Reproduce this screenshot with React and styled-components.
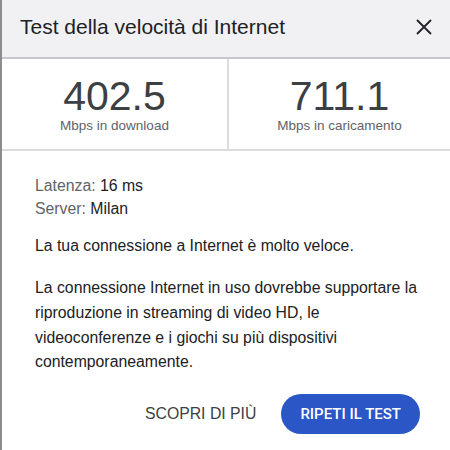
import styled, { createGlobalStyle } from 'styled-components'

const GlobalStyle = createGlobalStyle`
  html, body {
    margin: 0;
    padding: 0;
    background: #ffffff;
  }
  body {
    font-family: "Liberation Sans", Arial, sans-serif;
  }
`

const Dialog = styled.div`
  width: 450px;
  height: 450px;
  box-sizing: border-box;
  border-left: 2px solid #8c8c8c;
  background: #ffffff;
  display: flex;
  flex-direction: column;
`

const Header = styled.div`
  height: 59px;
  box-sizing: border-box;
  background: #f1f1f3;
  border-bottom: 2px solid #c8c8cc;
  display: flex;
  align-items: center;
  justify-content: space-between;
  padding: 0 16px 4px 18px;
`

const Title = styled.h1`
  margin: 0;
  font-size: 21px;
  font-weight: 400;
  color: #202124;
`

const CloseButton = styled.button`
  border: none;
  background: none;
  padding: 0;
  width: 20px;
  height: 20px;
  display: flex;
  align-items: center;
  justify-content: center;
  cursor: pointer;
`

const Stats = styled.div`
  display: grid;
  grid-template-columns: 225px 1fr;
  border-bottom: 2px solid #dcdcdf;
`

const Stat = styled.div`
  display: flex;
  flex-direction: column;
  align-items: center;
  padding: 16px 0 15px;
  ${(props) => props.$divided && 'border-left: 2px solid #dcdcdf;'}
`

const Value = styled.div`
  font-size: 41px;
  line-height: 42px;
  color: #3c4043;
`

const Unit = styled.div`
  margin-top: 1px;
  font-size: 13.5px;
  line-height: 16px;
  color: #5f6368;
`

const Body = styled.div`
  padding: 23px 18px 0 33px;
  font-size: 15.8px;
  color: #202124;
`

const InfoLine = styled.div`
  line-height: 23px;
`

const InfoLabel = styled.span`
  color: #5f6368;
`

const Summary = styled.p`
  margin: 14px 0 0;
  line-height: 23px;
`

const Details = styled.p`
  margin: 19px 0 0;
  line-height: 24.8px;
`

const Actions = styled.div`
  display: flex;
  justify-content: flex-end;
  align-items: center;
  gap: 25px;
  padding: 19px 30px 0 0;
`

const TextButton = styled.button`
  border: none;
  background: none;
  padding: 0;
  font-family: inherit;
  font-size: 15.8px;
  color: #3c4043;
  text-transform: uppercase;
  cursor: pointer;
`

const PrimaryButton = styled.button`
  height: 40px;
  padding: 0 19px;
  border: none;
  border-radius: 20px;
  background: #2a56c6;
  color: #ffffff;
  font-family: Roboto, "Liberation Sans", sans-serif;
  font-weight: 500;
  font-size: 15px;
  text-transform: uppercase;
  cursor: pointer;
`

function CloseIcon() {
  return (
    <svg width="16" height="16" viewBox="0 0 16 16">
      <path d="M1 1 L15 15 M15 1 L1 15" stroke="#202124" strokeWidth="1.8" fill="none" />
    </svg>
  )
}

export default function App() {
  return (
    <>
      <GlobalStyle />
      <Dialog>
        <Header>
          <Title>Test della velocità di Internet</Title>
          <CloseButton aria-label="Chiudi">
            <CloseIcon />
          </CloseButton>
        </Header>
        <Stats>
          <Stat>
            <Value>402.5</Value>
            <Unit>Mbps in download</Unit>
          </Stat>
          <Stat $divided>
            <Value>711.1</Value>
            <Unit>Mbps in caricamento</Unit>
          </Stat>
        </Stats>
        <Body>
          <InfoLine>
            <InfoLabel>Latenza:</InfoLabel> 16 ms
          </InfoLine>
          <InfoLine>
            <InfoLabel>Server:</InfoLabel> Milan
          </InfoLine>
          <Summary>La tua connessione a Internet è molto veloce.</Summary>
          <Details>
            La connessione Internet in uso dovrebbe supportare la riproduzione in streaming di
            video HD, le videoconferenze e i giochi su più dispositivi contemporaneamente.
          </Details>
        </Body>
        <Actions>
          <TextButton>Scopri di più</TextButton>
          <PrimaryButton>Ripeti il test</PrimaryButton>
        </Actions>
      </Dialog>
    </>
  )
}
